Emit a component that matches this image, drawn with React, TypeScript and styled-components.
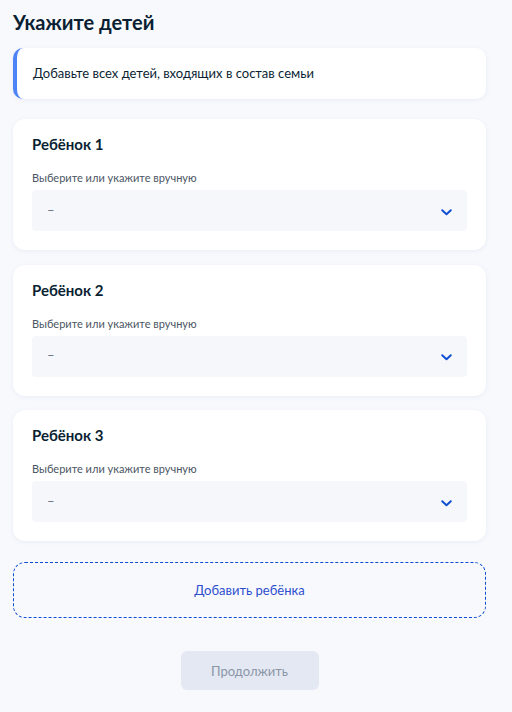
import React from 'react';
import { styled, createGlobalStyle } from 'styled-components';

const GlobalStyle = createGlobalStyle`
  body {
    margin: 0;
    background: #f8f9fd;
    font-family: Lato, "Noto Sans", sans-serif;
    color: #0b1f33;
  }
`;

const Page = styled.div`
  width: 473px;
  padding: 10px 0 20px 13px;
`;

const Title = styled.h1`
  margin: 0 0 14px;
  font-size: 20px;
  line-height: 24px;
  font-weight: 700;
`;

const InfoCard = styled.div`
  background: #fff;
  border-radius: 10px;
  border-left: 4px solid #4f84f6;
  box-shadow: 0 1px 4px rgba(140, 160, 200, 0.15);
  padding: 15px 16px 16px 16px;
  font-size: 13px;
  line-height: 20px;
  margin-bottom: 20px;
`;

const Cards = styled.div`
  display: flex;
  flex-direction: column;
  gap: 14.5px;
`;

const Card = styled.div`
  background: #fff;
  border-radius: 12px;
  box-shadow: 0 1px 4px rgba(140, 160, 200, 0.15);
  padding: 15px 19px 19px;
`;

const CardTitle = styled.div`
  font-size: 15px;
  line-height: 20px;
  font-weight: 700;
  margin-bottom: 16px;
`;

const Label = styled.div`
  font-size: 11px;
  line-height: 16px;
  color: #4a5563;
  margin-bottom: 4px;
`;

const Select = styled.div`
  height: 41px;
  background: #f5f7fb;
  border-radius: 4px;
  display: flex;
  align-items: center;
  justify-content: space-between;
  padding: 0 15px 0 15px;
`;

const Placeholder = styled.span`
  font-size: 13px;
  color: #66727f;
  margin-top: -2px;
`;

const Chevron = () => (
  <svg width="11" height="7" viewBox="0 0 11 7" style={{ marginTop: 3 }}>
    <path d="M1.2 1.2 L5.5 5.3 L9.8 1.2" fill="none" stroke="#0d4cd3" strokeWidth="1.9" strokeLinecap="round" strokeLinejoin="round" />
  </svg>
);

const AddButton = styled.div`
  margin-top: 21px;
  height: 56px;
  box-sizing: border-box;
  border: 1px dashed #0d4cd3;
  border-radius: 12px;
  display: flex;
  align-items: center;
  justify-content: center;
  font-size: 13px;
  color: #2c4fcf;
`;

const Footer = styled.div`
  display: flex;
  justify-content: center;
  margin-top: 33px;
`;

const ContinueButton = styled.button`
  width: 138px;
  height: 39px;
  border: none;
  border-radius: 6px;
  background: #e4e8f2;
  color: #8a96a8;
  font-family: inherit;
  font-size: 13px;
`;

const children = ['Ребёнок 1', 'Ребёнок 2', 'Ребёнок 3'];

export default function App() {
  return (
    <>
      <GlobalStyle />
      <Page>
        <Title>Укажите детей</Title>
        <InfoCard>Добавьте всех детей, входящих в состав семьи</InfoCard>
        <Cards>
          {children.map((name) => (
            <Card key={name}>
              <CardTitle>{name}</CardTitle>
              <Label>Выберите или укажите вручную</Label>
              <Select>
                <Placeholder>–</Placeholder>
                <Chevron />
              </Select>
            </Card>
          ))}
        </Cards>
        <AddButton>Добавить ребёнка</AddButton>
        <Footer>
          <ContinueButton>Продолжить</ContinueButton>
        </Footer>
      </Page>
    </>
  );
}
